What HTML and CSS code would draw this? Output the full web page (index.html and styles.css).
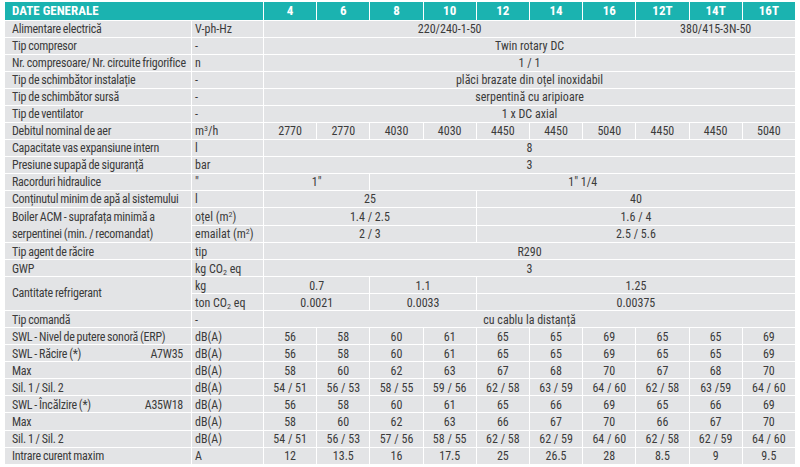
FILE: index.html
```html
<!DOCTYPE html>
<html lang="ro">
<head>
<meta charset="utf-8">
<title>Date generale</title>
<link rel="stylesheet" href="styles.css">
</head>
<body>
<table class="spec">
  <colgroup>
    <col class="c-label">
    <col class="c-unit">
    <col class="c-val" span="10">
  </colgroup>
  <thead>
    <tr class="head">
      <th colspan="2" class="title">DATE GENERALE</th>
      <th>4</th><th>6</th><th>8</th><th>10</th><th>12</th><th>14</th><th>16</th><th>12T</th><th>14T</th><th>16T</th>
    </tr>
  </thead>
  <tbody>
    <tr><td class="lbl">Alimentare electrică</td><td class="unit">V-ph-Hz</td><td colspan="7">220/240-1-50</td><td colspan="3">380/415-3N-50</td></tr>
    <tr><td class="lbl">Tip compresor</td><td class="unit">-</td><td colspan="10">Twin rotary DC</td></tr>
    <tr><td class="lbl">Nr. compresoare/ Nr. circuite frigorifice</td><td class="unit">n</td><td colspan="10">1 / 1</td></tr>
    <tr><td class="lbl">Tip de schimbător instalație</td><td class="unit">-</td><td colspan="10">plăci brazate din oțel inoxidabil</td></tr>
    <tr><td class="lbl">Tip de schimbător sursă</td><td class="unit">-</td><td colspan="10">serpentină cu aripioare</td></tr>
    <tr><td class="lbl">Tip de ventilator</td><td class="unit">-</td><td colspan="10">1 x DC axial</td></tr>
    <tr><td class="lbl">Debitul nominal de aer</td><td class="unit">m<sup>3</sup>/h</td><td>2770</td><td>2770</td><td>4030</td><td>4030</td><td>4450</td><td>4450</td><td>5040</td><td>4450</td><td>4450</td><td>5040</td></tr>
    <tr><td class="lbl">Capacitate vas expansiune intern</td><td class="unit">l</td><td colspan="10">8</td></tr>
    <tr><td class="lbl">Presiune supapă de siguranță</td><td class="unit">bar</td><td colspan="10">3</td></tr>
    <tr><td class="lbl">Racorduri hidraulice</td><td class="unit">"</td><td colspan="2">1"</td><td colspan="8">1" 1/4</td></tr>
    <tr><td class="lbl">Conținutul minim de apă al sistemului</td><td class="unit">l</td><td colspan="4">25</td><td colspan="6">40</td></tr>
    <tr><td class="lbl two" rowspan="2">Boiler ACM - suprafața minimă a<br>serpentinei (min. / recomandat)</td><td class="unit">oțel (m<sup>2</sup>)</td><td colspan="4">1.4 / 2.5</td><td colspan="6">1.6 / 4</td></tr>
    <tr><td class="unit">emailat (m<sup>2</sup>)</td><td colspan="4">2 / 3</td><td colspan="6">2.5 / 5.6</td></tr>
    <tr><td class="lbl">Tip agent de răcire</td><td class="unit">tip</td><td colspan="10">R290</td></tr>
    <tr><td class="lbl">GWP</td><td class="unit">kg CO<sub>2</sub> eq</td><td colspan="10">3</td></tr>
    <tr><td class="lbl mid" rowspan="2">Cantitate refrigerant</td><td class="unit">kg</td><td colspan="2">0.7</td><td colspan="2">1.1</td><td colspan="6">1.25</td></tr>
    <tr><td class="unit">ton CO<sub>2</sub> eq</td><td colspan="2">0.0021</td><td colspan="2">0.0033</td><td colspan="6">0.00375</td></tr>
    <tr><td class="lbl">Tip comandă</td><td class="unit">-</td><td colspan="10">cu cablu la distanță</td></tr>
    <tr><td class="lbl">SWL - Nivel de putere sonoră (ERP)</td><td class="unit">dB(A)</td><td>56</td><td>58</td><td>60</td><td>61</td><td>65</td><td>65</td><td>69</td><td>65</td><td>65</td><td>69</td></tr>
    <tr><td class="lbl"><div class="split"><span>SWL - Răcire (*)</span><span>A7W35</span></div></td><td class="unit">dB(A)</td><td>56</td><td>58</td><td>60</td><td>61</td><td>65</td><td>65</td><td>69</td><td>65</td><td>65</td><td>69</td></tr>
    <tr><td class="lbl">Max</td><td class="unit">dB(A)</td><td>58</td><td>60</td><td>62</td><td>63</td><td>67</td><td>68</td><td>70</td><td>67</td><td>68</td><td>70</td></tr>
    <tr><td class="lbl">Sil. 1 / Sil. 2</td><td class="unit">dB(A)</td><td>54 / 51</td><td>56 / 53</td><td>58 / 55</td><td>59 / 56</td><td>62 / 58</td><td>63 / 59</td><td>64 / 60</td><td>62 / 58</td><td>63 /59</td><td>64 / 60</td></tr>
    <tr><td class="lbl"><div class="split"><span>SWL - Încălzire (*)</span><span>A35W18</span></div></td><td class="unit">dB(A)</td><td>56</td><td>58</td><td>60</td><td>61</td><td>65</td><td>66</td><td>69</td><td>65</td><td>66</td><td>69</td></tr>
    <tr><td class="lbl">Max</td><td class="unit">dB(A)</td><td>58</td><td>60</td><td>62</td><td>63</td><td>66</td><td>67</td><td>70</td><td>66</td><td>67</td><td>70</td></tr>
    <tr><td class="lbl">Sil. 1 / Sil. 2</td><td class="unit">dB(A)</td><td>54 / 51</td><td>56 / 53</td><td>57 / 56</td><td>58 / 55</td><td>62 / 58</td><td>62 / 59</td><td>64 / 60</td><td>62 / 58</td><td>62 / 59</td><td>64 / 60</td></tr>
    <tr><td class="lbl">Intrare curent maxim</td><td class="unit">A</td><td>12</td><td>13.5</td><td>16</td><td>17.5</td><td>25</td><td>26.5</td><td>28</td><td>8.5</td><td>9</td><td>9.5</td></tr>
  </tbody>
</table>
</body>
</html>
```
FILE: styles.css
```css
html, body {
  margin: 0;
  padding: 0;
  background: #ffffff;
}

.spec {
  border-collapse: separate;
  border-spacing: 1px;
  table-layout: fixed;
  width: 792px;
  margin: 1px 0 0 4px;
  font-family: "Roboto Condensed", "Liberation Sans Narrow", Roboto, sans-serif;
  font-stretch: condensed;
  font-size: 12px;
  color: #3b3b3b;
}

.c-label { width: 186px; }
.c-unit { width: 71px; }
.c-val { width: 52.2px; }

.head th {
  box-sizing: border-box;
  height: 17.5px;
  padding: 1px 0 0;
  background: #1bb3b0;
  color: #ffffff;
  font-weight: bold;
  font-size: 13px;
  text-align: center;
  line-height: 16px;
}

.head th.title {
  text-align: left;
  padding-left: 7px;
}

.spec td {
  box-sizing: border-box;
  height: 16.05px;
  padding: 2.5px 0 0;
  background: #e3e4e6;
  text-align: center;
  line-height: 13.5px;
  white-space: nowrap;
  overflow: hidden;
}

.spec td.lbl {
  text-align: left;
  padding-left: 7px;
  letter-spacing: -0.25px;
  word-spacing: -0.5px;
}

.spec td.lbl.two {
  padding-top: 1px;
  line-height: 16.5px;
}

.spec td.lbl.mid {
  padding-top: 1px;
}

.spec td.unit {
  text-align: left;
  padding-left: 3px;
}

.split {
  display: flex;
  justify-content: space-between;
  padding-right: 8px;
}

sup, sub {
  font-size: 8px;
  line-height: 0;
}

sup { vertical-align: 4px; }
sub { vertical-align: -2px; }
```
